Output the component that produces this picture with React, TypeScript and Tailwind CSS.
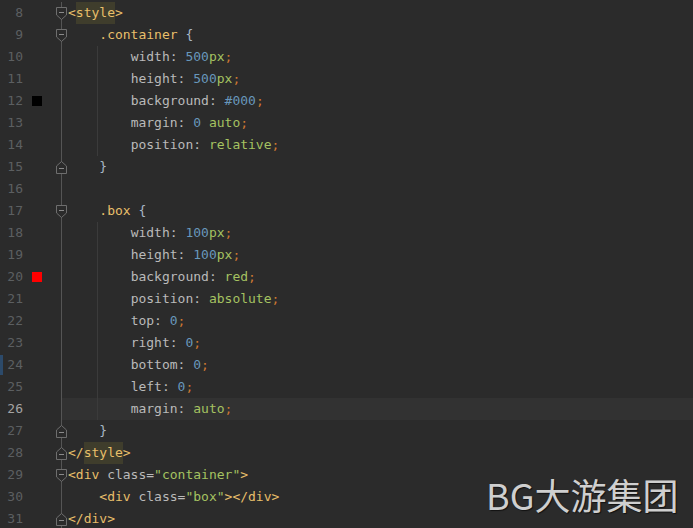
import React from "react";

type Tok = [string, string];

const TAG = "text-[#e8bf6a]";
const SEL = "text-[#e8bf6a]";
const PROP = "text-[#bababa]";
const NUM = "text-[#6897bb]";
const VAL = "text-[#a5c261]";
const SEMI = "text-[#cc7832]";
const PLAIN = "text-[#a9b7c6]";
const ATTR = "text-[#bababa]";

type Line = {
  n: number;
  indent: number;
  toks: Tok[];
  marker?: "black" | "red";
  fold?: "open" | "close";
  guide?: boolean;
  current?: boolean;
};

const prop = (name: string, rest: Tok[]): Tok[] => [[name, PROP], [": ", PROP], ...rest, [";", SEMI]];

const lines: Line[] = [
  { n: 8, indent: 0, toks: [["<", TAG], ["style", TAG + " bg-[#3f3d2c]"], [">", TAG]], fold: "open" },
  { n: 9, indent: 4, toks: [[".container", SEL], [" {", PLAIN]], fold: "open" },
  { n: 10, indent: 8, toks: prop("width", [["500", NUM], ["px", VAL]]), guide: true },
  { n: 11, indent: 8, toks: prop("height", [["500", NUM], ["px", VAL]]), guide: true },
  { n: 12, indent: 8, toks: prop("background", [["#000", NUM]]), guide: true, marker: "black" },
  { n: 13, indent: 8, toks: prop("margin", [["0", NUM], [" ", PLAIN], ["auto", VAL]]), guide: true },
  { n: 14, indent: 8, toks: prop("position", [["relative", VAL]]), guide: true },
  { n: 15, indent: 4, toks: [["}", PLAIN]], fold: "close" },
  { n: 16, indent: 0, toks: [] },
  { n: 17, indent: 4, toks: [[".box", SEL], [" {", PLAIN]], fold: "open" },
  { n: 18, indent: 8, toks: prop("width", [["100", NUM], ["px", VAL]]), guide: true },
  { n: 19, indent: 8, toks: prop("height", [["100", NUM], ["px", VAL]]), guide: true },
  { n: 20, indent: 8, toks: prop("background", [["red", VAL]]), guide: true, marker: "red" },
  { n: 21, indent: 8, toks: prop("position", [["absolute", VAL]]), guide: true },
  { n: 22, indent: 8, toks: prop("top", [["0", NUM]]), guide: true },
  { n: 23, indent: 8, toks: prop("right", [["0", NUM]]), guide: true },
  { n: 24, indent: 8, toks: prop("bottom", [["0", NUM]]), guide: true },
  { n: 25, indent: 8, toks: prop("left", [["0", NUM]]), guide: true },
  { n: 26, indent: 8, toks: prop("margin", [["auto", VAL]]), guide: true, current: true },
  { n: 27, indent: 4, toks: [["}", PLAIN]], fold: "close" },
  { n: 28, indent: 0, toks: [["</", TAG], ["style", TAG + " bg-[#3f3d2c]"], [">", TAG]], fold: "close" },
  {
    n: 29,
    indent: 0,
    toks: [["<div", TAG], [" ", PLAIN], ["class", ATTR], ["=", ATTR], ['"container"', VAL], [">", TAG]],
    fold: "open",
  },
  {
    n: 30,
    indent: 4,
    toks: [["<div", TAG], [" ", PLAIN], ["class", ATTR], ["=", ATTR], ['"box"', VAL], ["></div>", TAG]],
  },
  { n: 31, indent: 0, toks: [["</div>", TAG]], fold: "close" },
];

function FoldIcon({ kind }: { kind: "open" | "close" }) {
  return (
    <svg width="11" height="13" viewBox="0 0 11 13" className="absolute left-[56px] top-[5px]">
      {kind === "open" ? (
        <path d="M0.5 0.5 H10.5 V8 L5.5 12.5 L0.5 8 Z" fill="#2b2b2b" stroke="#6e6e6e" strokeWidth="1" />
      ) : (
        <path d="M0.5 12.5 H10.5 V5 L5.5 0.5 L0.5 5 Z" fill="#2b2b2b" stroke="#6e6e6e" strokeWidth="1" />
      )}
      <path d={kind === "open" ? "M3 5.5 H8" : "M3 7.5 H8"} stroke="#8a8a8a" strokeWidth="1" />
    </svg>
  );
}

export default function App() {
  return (
    <div
      className="relative w-[693px] h-[528px] overflow-hidden bg-[#2b2b2b] pt-[2px]"
      style={{ fontFamily: '"DejaVu Sans Mono", "Liberation Mono", monospace' }}
    >
      {lines.map((l) => (
        <div key={l.n} className="relative flex h-[22px] items-center">
          <div className="flex h-full w-[62px] shrink-0 items-center border-r border-[#555555]">
            <div
              className={`w-[23px] text-right text-[13px] ${l.current ? "text-[#a4a3a3]" : "text-[#5c5f61]"}`}
            >
              {l.n}
            </div>
            <div className="ml-[9px] w-[10px]">
              {l.marker === "black" && <div className="h-[10px] w-[10px] bg-black" />}
              {l.marker === "red" && <div className="h-[10px] w-[10px] bg-[#ff0000]" />}
            </div>
          </div>
          <div className={`relative h-full flex-1 pl-[6px] ${l.current ? "bg-[#323232]" : ""}`}>
            {l.guide && <div className="absolute left-[35px] top-0 h-full w-px bg-[#3b3b3b]" />}
            <pre className="relative block text-[13px] leading-[22px] whitespace-pre" style={{ fontFamily: "inherit" }}>
              <span>{" ".repeat(l.indent)}</span>
              {l.toks.map((t, i) => (
                <span key={i} className={`${t[1]} inline-block h-[22px] whitespace-pre`}>
                  {t[0]}
                </span>
              ))}
            </pre>
          </div>
          {l.fold && <FoldIcon kind={l.fold} />}
        </div>
      ))}
      <div className="absolute left-0 top-[355px] h-[20px] w-[3px] bg-[#2c4a6a]" />
      <div
        className="absolute left-[486px] top-[472px] text-[36px] leading-[44px] text-[#cfcfcf]"
        style={{
          fontFamily: '"Noto Sans CJK SC", "Noto Sans", sans-serif',
          textShadow: "1px 1px 1px rgba(0,0,0,0.6)",
        }}
      >
        BG大游集团
      </div>
    </div>
  );
}
